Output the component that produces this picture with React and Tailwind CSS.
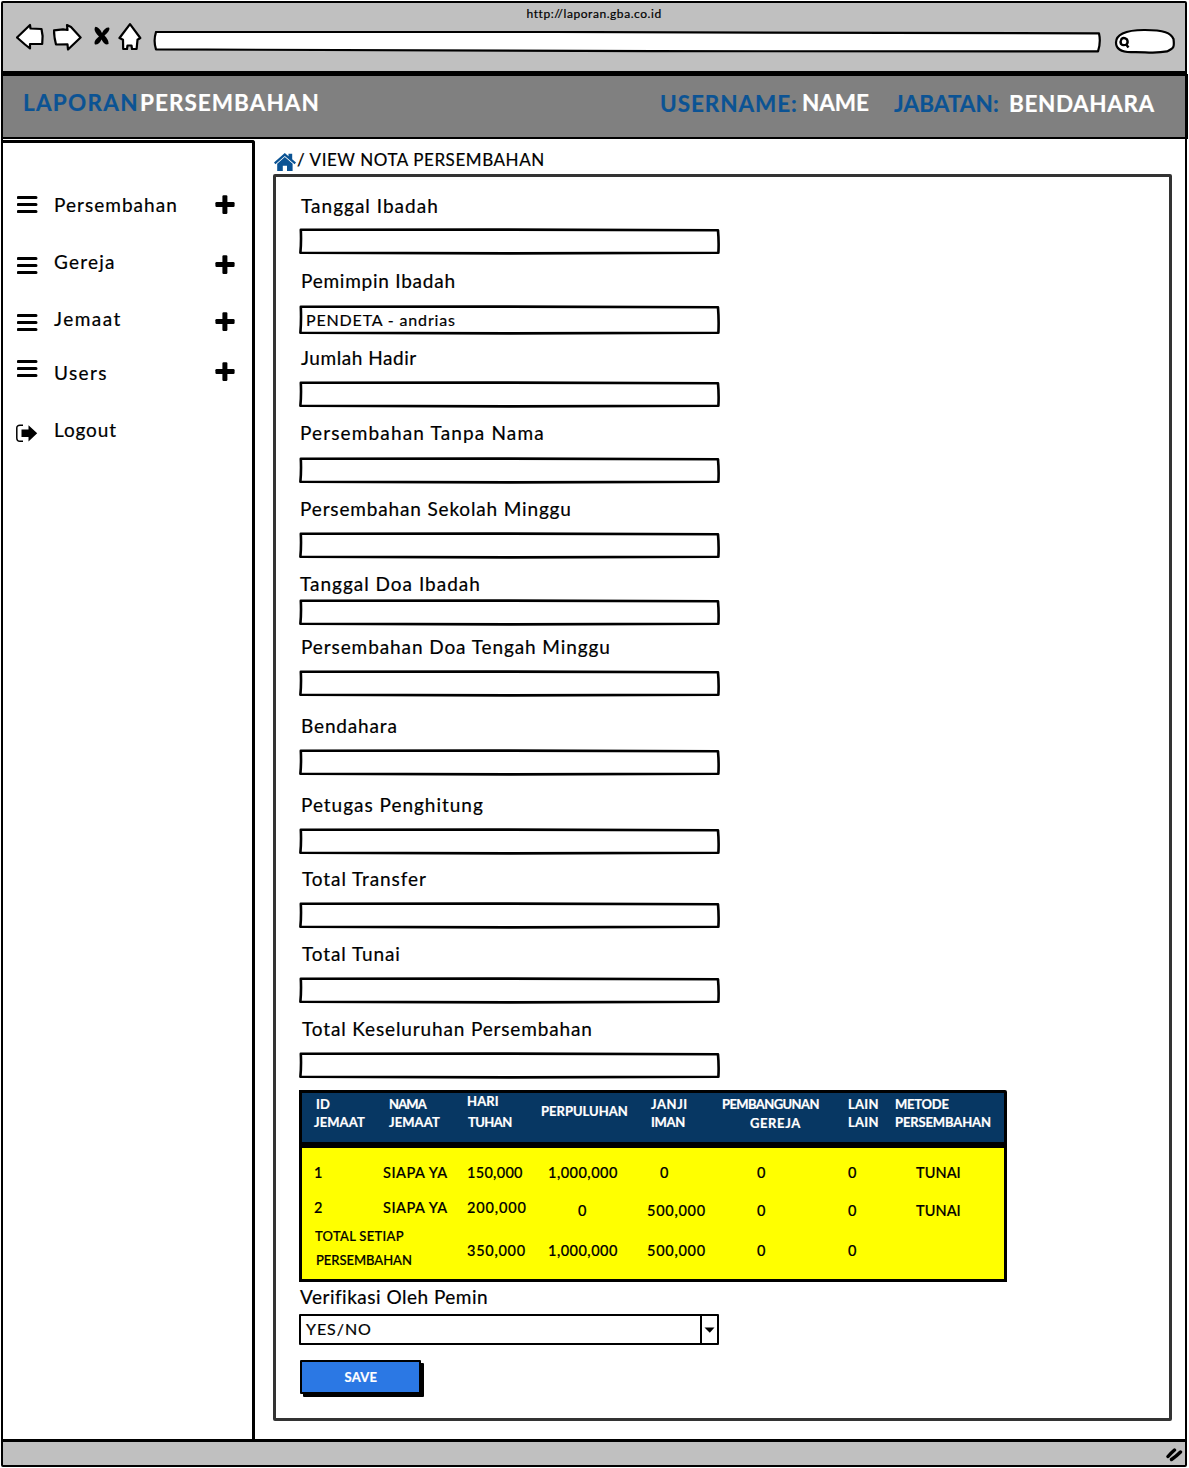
import { useLayoutEffect, useRef } from "react";

/* Text whose tracking is adjusted so that the line fills its box. */
function T({ className = "", children }) {
  const box = useRef(null);
  const span = useRef(null);
  useLayoutEffect(() => {
    const s = span.current;
    s.style.letterSpacing = "0px";
    const natural = s.getBoundingClientRect().width;
    const gaps = Math.max(1, String(children).length);
    if (gaps > 1) s.style.letterSpacing = (box.current.clientWidth + 0.8 - natural) / gaps + "px";
  }, [children]);
  return (
    <div ref={box} className={"shrink-0 whitespace-nowrap " + className}>
      <span ref={span} className="inline-block">{children}</span>
    </div>
  );
}

/* Hand-drawn outline laid over a box. */
function Sketch({ w, h, fill = "none" }) {
  return (
    <svg className="absolute inset-0 h-full w-full overflow-visible" viewBox={`0 0 ${w} ${h}`} preserveAspectRatio="none" fill={fill} stroke="#000" strokeWidth="2.6" strokeLinejoin="round">
      <path d={`M1.8 1.8 L${w * 0.45} 1.6 L${w - 2} 2.3 Q${w - 1} ${h / 2} ${w - 1.6} ${h - 2.2} L${w * 0.5} ${h - 1.6} L1.4 ${h - 2.3} Q2.4 ${h / 2} 1.8 1.8Z`} />
    </svg>
  );
}

const fields = [
  ["Tanggal Ibadah", "mt-[17px] ml-[2px] w-[137px]", "mt-[10px] h-[27px]"],
  ["Pemimpin Ibadah", "mt-[14px] ml-[2px] w-[154px]", "mt-[12px] h-[30px]", "PENDETA - andrias"],
  ["Jumlah Hadir", "mt-[11px] ml-[2px] w-[115px]", "mt-[11px] h-[27px]"],
  ["Persembahan Tanpa Nama", "mt-[13px] ml-[1px] w-[244px]", "mt-[12px] h-[27px]"],
  ["Persembahan Sekolah Minggu", "mt-[13px] ml-[1px] w-[271px]", "mt-[11px] h-[27px]"],
  ["Tanggal Doa Ibadah", "mt-[13px] ml-[1px] w-[180px]", "mt-[3px] h-[27px]"],
  ["Persembahan Doa Tengah Minggu", "mt-[9px] ml-[2px] w-[309px]", "mt-[11px] h-[27px]"],
  ["Bendahara", "mt-[17px] ml-[2px] w-[96px]", "mt-[11px] h-[27px]"],
  ["Petugas Penghitung", "mt-[17px] ml-[2px] w-[182px]", "mt-[11px] h-[27px]"],
  ["Total Transfer", "mt-[12px] ml-[3px] w-[124px]", "mt-[11px] h-[27px]"],
  ["Total Tunai", "mt-[13px] ml-[3px] w-[98px]", "mt-[11px] h-[27px]"],
  ["Total Keseluruhan Persembahan", "mt-[13px] ml-[3px] w-[290px]", "mt-[11px] h-[27px]"],
];

const cols = ["w-[78px]", "w-[79px]", "w-[77px]", "w-[105px]", "w-[72px]", "w-[126px]", "w-[52px]", "w-[114px]"];

const heads = [
  [["ID", "mt-[3px] ml-[15px] w-[13px]"], ["JEMAAT", "ml-[13px] w-[50px]"]],
  [["NAMA", "mt-[3px] ml-[10px] w-[36px]"], ["JEMAAT", "ml-[10px] w-[50px]"]],
  [["HARI", "ml-[9px] w-[31px]"], ["TUHAN", "mt-[3px] ml-[10px] w-[43px]"]],
  [["PERPULUHAN", "mt-[10px] ml-[6px] w-[86px]"]],
  [["JANJI", "mt-[3px] ml-[11px] w-[36px]"], ["IMAN", "ml-[11px] w-[33px]"]],
  [["PEMBANGUNAN", "mt-[3px] ml-[10px] w-[96px]"], ["GEREJA", "mt-[1px] ml-[38px] w-[50px]"]],
  [["LAIN", "mt-[3px] ml-[10px] w-[30px]"], ["LAIN", "ml-[10px] w-[30px]"]],
  [["METODE", "mt-[3px] ml-[5px] w-[53px]"], ["PERSEMBAHAN", "ml-[5px] w-[95px]"]],
];

const rows = [
  ["h-[45px] pt-[15px]", [
    ["1", "ml-[13px] w-[6px]"], ["SIAPA YA", "ml-[4px] w-[64px]"], ["150,000", "ml-[9px] w-[55px]"],
    ["1,000,000", "ml-[13px] w-[69px]"], ["0", "ml-[20px] w-[9px]"], ["0", "ml-[45px] w-[9px]"],
    ["0", "ml-[10px] w-[9px]"], ["TUNAI", "ml-[26px] w-[44px]"],
  ]],
  ["h-[34px] pt-[5px]", [
    ["2", "ml-[13px] w-[9px]"], ["SIAPA YA", "ml-[4px] w-[64px]"], ["200,000", "ml-[9px] w-[59px]"],
    ["0", "mt-[3px] ml-[43px] w-[9px]"], ["500,000", "mt-[3px] ml-[7px] w-[58px]"], ["0", "mt-[3px] ml-[45px] w-[9px]"],
    ["0", "mt-[3px] ml-[10px] w-[9px]"], ["TUNAI", "mt-[3px] ml-[26px] w-[44px]"],
  ]],
];

const totals = [
  ["350,000", "ml-[9px] w-[58px]"], ["1,000,000", "ml-[13px] w-[69px]"], ["500,000", "ml-[7px] w-[58px]"],
  ["0", "ml-[45px] w-[9px]"], ["0", "ml-[10px] w-[9px]"],
];

const menu = [
  ["Persembahan", "w-[123px]", "h-[57px]", "mt-[3px]", "mt-[2px]"],
  ["Gereja", "w-[61px]", "h-[57px]", "mt-[7px]", "mt-[5px]"],
  ["Jemaat", "w-[67px]", "h-[54px]", "mt-[7px]", "mt-[5px]"],
  ["Users", "w-[53px]", "h-[57px]", "-mt-px", "mt-px"],
];

function Bars({ className }) {
  return (
    <svg className={"h-[18px] w-[21px] shrink-0 " + className} viewBox="0 0 21 18" stroke="#000" strokeWidth="3" strokeLinecap="round">
      <path d="M1.3 1.5H19M1.3 8.5H19M1.3 15.5H19" />
    </svg>
  );
}

function Plus({ className }) {
  return (
    <svg className={"h-[19px] w-[20px] shrink-0 " + className} viewBox="0 0 20 19">
      <rect x="7.4" y="0.3" width="5" height="18.6" rx="1.2" />
      <rect x="0.4" y="7" width="19.2" height="5" rx="1.2" />
    </svg>
  );
}

function TitleBar() {
  return (
    <header className="h-[71px] bg-[#c0c0c0] border-b-[3px] border-black">
      <div className="flex h-[20px] justify-center text-[12px] leading-[20px]">
        <T className="mt-px -ml-px w-[134px] h-[20px]">http://laporan.gba.co.id</T>
      </div>
      <div className="flex h-[30px] items-start pl-[13px]">
        <svg className="h-[28px] w-[29px] shrink-0" viewBox="0 0 29 28" fill="#fff" stroke="#000" strokeWidth="2.2" strokeLinejoin="round">
          <path d="M1 14.5 L14 2 L14.5 5.5 L25.5 6 L26.6 13 L26.2 21 L14 21 L14 25.5 L9 21.5Z" />
        </svg>
        <svg className="ml-[8px] h-[28px] w-[29px] shrink-0" viewBox="0 0 29 28" fill="#fff" stroke="#000" strokeWidth="2.2" strokeLinejoin="round">
          <path d="M1 7.3 L10 6.3 L14.5 7 L14 2 L18 4 L27.6 14.5 L15 26.5 L14.5 21.3 L3 21.5 Q1 14 1 7.3Z" />
        </svg>
        <svg className="ml-[11px] mt-[3px] h-[20px] w-[18px] shrink-0" viewBox="0 0 18 20">
          <path d="M2.5 .8 Q6 1 9 7 Q12 1 16 1.5 Q18 4 11.5 9.5 Q16 14 15.5 18 Q12 20 8.5 13.5 Q6 19 2 18.5 Q0 15 6 10.5 Q-.5 4 2.5 .8Z" />
        </svg>
        <svg className="ml-[7px] h-[28px] w-[24px] shrink-0" viewBox="0 0 24 28" fill="#fff" stroke="#000" strokeWidth="2.2" strokeLinejoin="round">
          <path d="M12 1.2 L1.5 15 L5 16.8 L5.2 26 L9 26 L9.5 22.5 L13.5 22.5 L14 26 L18.6 26 L19.5 16.8 L22.3 15Z" />
        </svg>
        <div className="relative ml-[11px] mt-[8px] h-[22px] w-[948px] shrink-0">
          <svg className="absolute inset-0 h-full w-full" viewBox="0 0 948 22" fill="#fff" stroke="#000" strokeWidth="2.2" strokeLinejoin="round">
            <path d="M3 1 L400 1 L946 2.4 Q948 11 945 20.4 L500 20.2 L3 18.4 Q.2 10 3 1Z" />
          </svg>
        </div>
        <div className="relative ml-[13px] mt-[5px] h-[26px] w-[62px] shrink-0">
          <svg className="absolute inset-0 h-full w-full overflow-visible" viewBox="0 0 62 26" fill="#fff" stroke="#000" strokeWidth="2.2">
            <path d="M2 14.5 C2 7.5 10 1.8 31 2 C50 2 57 5 59.5 11 C60.5 19 60 20.5 53 23.4 C40 26 30 23.5 17 24.2 C7 24 2 20.5 2 14.5Z" />
            <path d="M7.5 11 Q10 9 13 11.5 Q14.5 14.5 12.5 16.5 Q9 18 7 16 Q6 13.5 7.5 11Z M11.8 16 L14.5 19.5" strokeWidth="2.4" />
          </svg>
        </div>
      </div>
    </header>
  );
}

function Banner() {
  return (
    <div className="-mr-[3px] flex h-[65px] items-start border-y-[2px] border-r-[3px] border-black bg-[#808080] pl-[20px] pt-[11px] text-[22.5px] font-bold leading-[32px] text-white">
      <T className="w-[115px] text-[#0b5394]">LAPORAN</T>
      <T className="ml-[2px] w-[179px]">PERSEMBAHAN</T>
      <T className="ml-[341px] mt-px w-[137px] text-[#0b5394]">USERNAME:</T>
      <T className="ml-[5px] w-[66px]">NAME</T>
      <T className="ml-[26px] mt-px w-[104px] text-[#0b5394]">JABATAN:</T>
      <T className="ml-[11px] mt-px w-[145px]">BENDAHARA</T>
    </div>
  );
}

function Sidebar() {
  return (
    <nav className="h-[1300px] w-[252px] shrink-0 rounded-tr-[3px] border-r-[3px] border-t-[3px] border-black pl-[14px] pt-[50px] text-[19px] leading-6">
      {menu.map(([label, w, h, iconTop, plusTop]) => (
        <div key={label} className={"flex items-start " + h}>
          <Bars className={iconTop} />
          <div className="ml-[16px] w-[161px] shrink-0"><T className={w}>{label}</T></div>
          <Plus className={plusTop} />
        </div>
      ))}
      <div className="flex items-start">
        <svg className="-ml-px mt-[6px] h-[19px] w-[22px] shrink-0" viewBox="0 0 22 19">
          <path d="M7 1.3 H4 Q.8 1.3 .8 4 V14 Q.8 17.3 4 17.3 H7" fill="none" stroke="#000" strokeWidth="1.5" />
          <path d="M5.5 5.5 H12.5 V1.2 L21.2 9.3 L12.5 17.5 V13 H5.5Z" />
        </svg>
        <T className="ml-[16px] w-[62px]">Logout</T>
      </div>
    </nav>
  );
}

function Table() {
  return (
    <div className="mt-[11px] w-[708px]">
      <div className="h-[55px] rounded-tr-[2px] border-[3px] border-black bg-[#073763] text-[13px] font-bold leading-[18px] text-white">
        <div className="-ml-px -mt-px flex">
          {heads.map((lines, i) => (
            <div key={i} className={"shrink-0 " + cols[i]}>
              {lines.map(([t, c]) => <T key={t + c} className={c}>{t}</T>)}
            </div>
          ))}
        </div>
      </div>
      <div className="h-[137px] border-[3px] border-black bg-[#ffff00] text-[14.5px] font-medium leading-[20px]">
        {rows.map(([h, cells]) => (
          <div key={h} className={"-ml-px flex " + h}>
            {cells.map(([t, c], i) => <div key={i} className={"shrink-0 " + cols[i]}><T className={c}>{t}</T></div>)}
          </div>
        ))}
        <div className="-ml-px flex">
          <div className="w-[157px] shrink-0 text-[13px] leading-[18px]">
            <T className="ml-[14px] w-[88px]">TOTAL SETIAP</T>
            <T className="ml-[15px] mt-[6px] w-[95px]">PERSEMBAHAN</T>
          </div>
          {totals.map(([t, c], i) => <div key={i} className={"shrink-0 pt-[14px] " + cols[i + 2]}><T className={c}>{t}</T></div>)}
        </div>
      </div>
    </div>
  );
}

export default function App() {
  return (
    <div className="h-[1468px] w-[1189px] bg-white pl-px pt-px font-['Lato','Open_Sans',sans-serif] text-black [-webkit-text-stroke:0.2px]">
      <div className="flex h-[1466px] w-[1186px] flex-col rounded-[2px] border-[2px] border-black">
        <TitleBar />
        <Banner />
        <div className="flex h-[1300px] items-start pt-px">
          <Sidebar />
          <main className="ml-[18px]">
            <div className="flex h-[34px] items-start pl-px pt-[8px]">
              <svg className="mt-[5px] h-[19px] w-[22px] shrink-0" viewBox="0 0 22 19" fill="#0b5394">
                <path d="M0 9.6 L10.8 0 L14.5 3.2 V.8 H18.2 V6.3 L22 9.6 L20.6 11.3 L10.8 2.9 L1.4 11.3Z" />
                <path d="M3.2 10.7 L10.8 4 L18.6 10.7 V18 H13 V12.8 H8.8 V18 H3.2Z" />
              </svg>
              <T className="ml-px w-[247px] text-[17px] leading-6">/ VIEW NOTA PERSEMBAHAN</T>
            </div>
            <section className="h-[1247px] w-[899px] rounded-[2px] border-[3px] border-[#333] pl-[23px] text-[19px] leading-6">
              {fields.map(([label, lc, bc, value]) => (
                <div key={label} className="flow-root">
                  <T className={lc}>{label}</T>
                  <div className={"relative w-[421px] pl-[7px] text-[16px] leading-[29px] " + bc}>
                    <Sketch w={421} h={value ? 30 : 27} />
                    {value && <T className="w-[149px]">{value}</T>}
                  </div>
                </div>
              ))}
              <Table />
              <T className="ml-px mt-[3px] h-6 w-[187px]">Verifikasi Oleh Pemin</T>
              <div className="relative mt-[5px] flex h-[31px] w-[420px] rounded-[1px] border-[2px] border-black pl-[5px] text-[16px] leading-[25px]">
                <T className="w-[65px]">YES/NO</T>
                <div className="ml-auto flex w-[17px] items-center justify-center border-l-[2px] border-black">
                  <svg className="h-[6px] w-[11px]" viewBox="0 0 11 6"><path d="M.5 .5 H10.5 L5.8 5.8Z" /></svg>
                </div>
              </div>
              <button className="mt-[15px] ml-px flex h-[34px] w-[121px] justify-center rounded-[1px] border-[2px] border-black bg-[#2b78e4] text-[13px] font-bold leading-[30px] text-white shadow-[3px_3px_0_#000]">
                <T className="w-[32px]">SAVE</T>
              </button>
            </section>
          </main>
        </div>
        <footer className="flex flex-1 items-center justify-end border-t-[3px] border-black bg-[#c0c0c0]">
          <svg className="mr-[2px] mt-[2px] h-[15px] w-[17px]" viewBox="0 0 17 15" stroke="#000" strokeWidth="3.4" strokeLinecap="round">
            <path d="M2 9.5 Q5 6 8.5 3 M5.5 12.5 Q10 9.5 14.5 5" fill="none" />
          </svg>
        </footer>
      </div>
    </div>
  );
}
